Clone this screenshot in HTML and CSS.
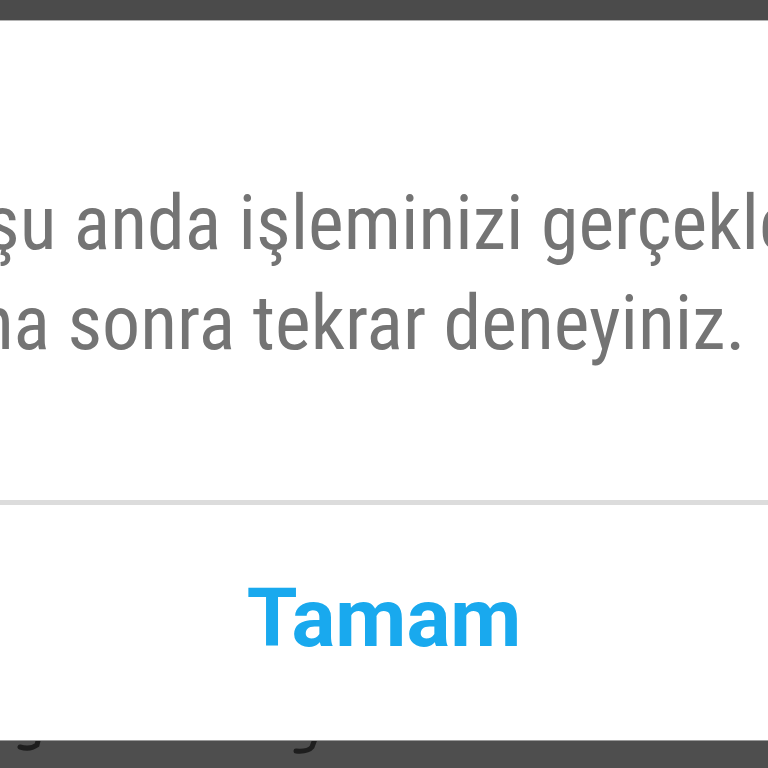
FILE: index.html
```html
<!DOCTYPE html>
<html lang="tr">
<head>
  <meta charset="UTF-8" />
  <meta name="viewport" content="width=device-width, initial-scale=1" />
  <title>Uyarı</title>
  <link rel="stylesheet" href="styles.css">
</head>
<body>

  <div class="screen">
    <div class="alert-dialog">
      <div class="alert-body">
        <p class="alert-message">
          <span class="line">Üzgünüz, şu anda işleminizi gerçekleştiremiyoruz.</span>
          <span class="line">Lütfen daha sonra tekrar deneyiniz.</span>
        </p>
      </div>
      <div class="alert-actions">
        <button class="ok-button">Tamam</button>
      </div>
    </div>

    <div class="page-behind">
      <svg width="768" height="29" viewBox="0 0 768 29">
        <path d="M20 6 Q30 9 37 4 L38 0" />
        <path d="M296 10 Q308 11 312 6 L315 -2" />
      </svg>
    </div>
  </div>

</body>
</html>
```

FILE: styles.css
```css
body {
  margin: 0;
  background: #4b4b4b;
  overflow: hidden;
}

.screen {
  height: 768px;
  display: flex;
  flex-direction: column;
  align-items: center;
  padding-top: 20px;
  box-sizing: border-box;
}

.alert-dialog {
  flex: none;
  width: 1400px;
  height: 719px;
  background: #fff;
  border-top: 1px solid #b4b4b4;
  display: flex;
  flex-direction: column;
}

.alert-body {
  height: 479px;
  display: flex;
  align-items: center;
  padding-left: 12px;
  padding-top: 25px;
  box-sizing: border-box;
}

.alert-message {
  margin: 0;
  font-family: "Roboto Condensed", Roboto, sans-serif;
  font-stretch: condensed;
  font-size: 76px;
  line-height: 100px;
  color: #747474;
  white-space: nowrap;
}

.line {
  display: block;
}

.alert-actions {
  flex: 1;
  border-top: 5px solid #dcdcdc;
  display: flex;
  align-items: center;
  justify-content: center;
  padding-bottom: 9px;
}

.ok-button {
  background: none;
  border: none;
  padding: 0;
  font-family: Roboto, "Liberation Sans", sans-serif;
  font-weight: bold;
  font-size: 82px;
  color: #19a9ee;
  cursor: pointer;
}

.page-behind {
  width: 768px;
  height: 29px;
  border-top: 1px solid #9a9a9a;
  background: #4e4e4e;
}

.page-behind path {
  fill: none;
  stroke: #1e1e1e;
  stroke-width: 5;
  stroke-linecap: round;
}
```
